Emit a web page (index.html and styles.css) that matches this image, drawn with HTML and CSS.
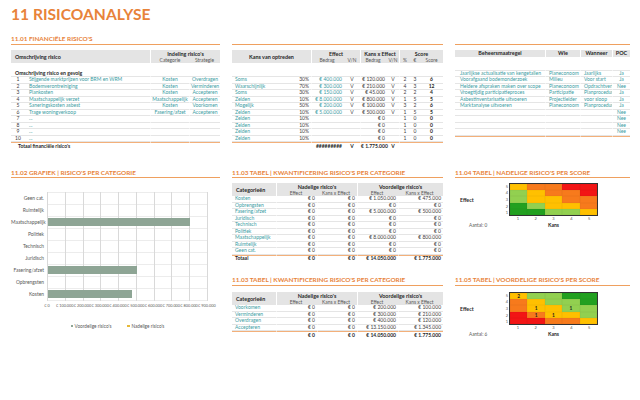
FILE: index.html
```html
<!DOCTYPE html>
<html lang="nl">
<head>
<meta charset="utf-8">
<title>11 Risicoanalyse</title>
<link rel="stylesheet" href="styles.css">
</head>
<body>
<div class="page">
  <h1 class="title">11 RISICOANALYSE</h1>

  <div class="band top">
    <section class="col">
      <h2 class="sec-head">11.01 FINANCIËLE RISICO'S</h2>
      <table class="tbl t1">
        <colgroup><col class="w14"><col class="w125"><col class="w39"><col class="w31"></colgroup>
        <thead>
          <tr><th colspan="2" rowspan="2" class="hl">Omschrijving risico</th><th colspan="2" class="g">Indeling risico's</th></tr>
          <tr><th class="sub g">Categorie</th><th class="sub">Strategie</th></tr>
        </thead>
        <tbody>
          <tr class="sp"><td colspan="4"></td></tr>
          <tr class="sp2"><td colspan="2" class="subhead">Omschrijving risico en gevolg</td><td class="g"></td><td></td></tr>
          <tr><td class="c">1</td><td class="tx">Stijgende marktprijzen voor BRM en WRM</td><td class="g c tx">Kosten</td><td class="g c tx">Overdragen</td></tr>
          <tr><td class="c">2</td><td class="tx">Bodemverontreiniging</td><td class="g c tx">Kosten</td><td class="g c tx">Verminderen</td></tr>
          <tr><td class="c">3</td><td class="tx">Plankosten</td><td class="g c tx">Kosten</td><td class="g c tx">Accepteren</td></tr>
          <tr><td class="c">4</td><td class="tx">Maatschappelijk verzet</td><td class="g c tx">Maatschappelijk</td><td class="g c tx">Accepteren</td></tr>
          <tr><td class="c">5</td><td class="tx">Saneringskosten asbest</td><td class="g c tx">Kosten</td><td class="g c tx">Voorkomen</td></tr>
          <tr><td class="c">6</td><td class="tx">Trage woningverkoop</td><td class="g c tx">Fasering/afzet</td><td class="g c tx">Accepteren</td></tr>
          <tr><td class="c">7</td><td class="tx">...</td><td class="g"></td><td class="g"></td></tr>
          <tr><td class="c">8</td><td class="tx">...</td><td class="g"></td><td class="g"></td></tr>
          <tr><td class="c">9</td><td class="tx">...</td><td class="g"></td><td class="g"></td></tr>
          <tr><td class="c">10</td><td class="tx">...</td><td class="g"></td><td class="g"></td></tr>
        </tbody>
        <tfoot>
          <tr><td colspan="2" class="tot-l">Totaal financiële risico's</td><td class="g"></td><td class="g"></td></tr>
        </tfoot>
      </table>
    </section>

    <section class="col">
      <div class="sec-head"></div>
      <table class="tbl t2">
        <colgroup><col class="w61"><col class="w18"><col class="w33"><col class="w16"><col class="w27"><col class="w12"><col class="w11"><col class="w10"><col class="w23"></colgroup>
        <thead>
          <tr><th colspan="2" rowspan="2">Kans van optreden</th><th colspan="2" class="g">Effect</th><th colspan="2" class="g">Kans x Effect</th><th colspan="3" class="g">Score</th></tr>
          <tr><th class="sub g r">Bedrag</th><th class="sub c">V/N</th><th class="sub g r">Bedrag</th><th class="sub c">V/N</th><th class="sub g c">%</th><th class="sub c">€</th><th class="sub c">Score</th></tr>
        </thead>
        <tbody>
          <tr class="sp"><td colspan="9"></td></tr>
          <tr class="sp2"><td colspan="2"></td><td class="g"></td><td></td><td class="g"></td><td></td><td class="g"></td><td></td><td></td></tr>
          <tr><td class="tx pl">Soms</td><td class="r">30%</td><td class="g r tx">€ 400.000</td><td class="c">V</td><td class="g r">€ 120.000</td><td class="c">V</td><td class="g c">2</td><td class="c">3</td><td class="c b">6</td></tr>
          <tr><td class="tx pl">Waarschijnlijk</td><td class="r">70%</td><td class="g r tx">€ 300.000</td><td class="c">V</td><td class="g r">€ 210.000</td><td class="c">V</td><td class="g c">4</td><td class="c">3</td><td class="c b">12</td></tr>
          <tr><td class="tx pl">Soms</td><td class="r">30%</td><td class="g r tx">€ 150.000</td><td class="c">V</td><td class="g r">€ 45.000</td><td class="c">V</td><td class="g c">2</td><td class="c">2</td><td class="c b">4</td></tr>
          <tr><td class="tx pl">Zelden</td><td class="r">10%</td><td class="g r tx">€ 8.000.000</td><td class="c">V</td><td class="g r">€ 800.000</td><td class="c">V</td><td class="g c">1</td><td class="c">5</td><td class="c b">5</td></tr>
          <tr><td class="tx pl">Mogelijk</td><td class="r">50%</td><td class="g r tx">€ 200.000</td><td class="c">V</td><td class="g r">€ 100.000</td><td class="c">V</td><td class="g c">3</td><td class="c">2</td><td class="c b">6</td></tr>
          <tr><td class="tx pl">Zelden</td><td class="r">10%</td><td class="g r tx">€ 5.000.000</td><td class="c">V</td><td class="g r">€ 500.000</td><td class="c">V</td><td class="g c">1</td><td class="c">5</td><td class="c b">5</td></tr>
          <tr><td class="tx pl">Zelden</td><td class="r">10%</td><td class="g"></td><td></td><td class="g r">€ 0</td><td></td><td class="g c">1</td><td class="c">0</td><td class="c b">0</td></tr>
          <tr><td class="tx pl">Zelden</td><td class="r">10%</td><td class="g"></td><td></td><td class="g r">€ 0</td><td></td><td class="g c">1</td><td class="c">0</td><td class="c b">0</td></tr>
          <tr><td class="tx pl">Zelden</td><td class="r">10%</td><td class="g"></td><td></td><td class="g r">€ 0</td><td></td><td class="g c">1</td><td class="c">0</td><td class="c b">0</td></tr>
          <tr><td class="tx pl">Zelden</td><td class="r">10%</td><td class="g"></td><td></td><td class="g r">€ 0</td><td></td><td class="g c">1</td><td class="c">0</td><td class="c b">0</td></tr>
        </tbody>
        <tfoot>
          <tr><td colspan="2"></td><td class="g r b">#########</td><td class="c b">V</td><td class="g r b">€ 1.775.000</td><td class="c b">V</td><td colspan="3" class="g"></td></tr>
        </tfoot>
      </table>
    </section>

    <section class="col">
      <div class="sec-head"></div>
      <table class="tbl t3">
        <colgroup><col class="w90"><col class="w35"><col class="w32"><col class="w18"></colgroup>
        <thead>
          <tr><th rowspan="2">Beheersmaatregel</th><th rowspan="2" class="g">Wie</th><th rowspan="2" class="g">Wanneer</th><th rowspan="2" class="g">POC</th></tr>
          <tr></tr>
        </thead>
        <tbody>
          <tr class="sp"><td colspan="4"></td></tr>
          <tr class="sp2"><td></td><td class="g"></td><td class="g"></td><td class="g"></td></tr>
          <tr><td class="tx pl5">Jaarlijkse actualisatie van kengetallen</td><td class="g tx pl">Planeconoom</td><td class="g tx pl">Jaarlijks</td><td class="g c tx">Ja</td></tr>
          <tr><td class="tx pl5">Voorafgaand bodemonderzoek</td><td class="g tx pl">Milieu</td><td class="g tx pl">Voor start</td><td class="g c tx">Ja</td></tr>
          <tr><td class="tx pl5">Heldere afspraken maken over scope</td><td class="g tx pl">Planeconoom</td><td class="g tx pl">Opdrachtverl</td><td class="g c tx">Nee</td></tr>
          <tr><td class="tx pl5">Vroegtijdig participatieproces</td><td class="g tx pl">Participatie</td><td class="g tx pl">Planprocedur</td><td class="g c tx">Ja</td></tr>
          <tr><td class="tx pl5">Asbestinventarisatie uitvoeren</td><td class="g tx pl">Projectleider</td><td class="g tx pl">voor sloop</td><td class="g c tx">Ja</td></tr>
          <tr><td class="tx pl5">Marktanalyse uitvoeren</td><td class="g tx pl">Planeconoom</td><td class="g tx pl">Planprocedur</td><td class="g c tx">Ja</td></tr>
          <tr><td></td><td class="g"></td><td class="g"></td><td class="g c tx">Nee</td></tr>
          <tr><td></td><td class="g"></td><td class="g"></td><td class="g c tx">Nee</td></tr>
          <tr><td></td><td class="g"></td><td class="g"></td><td class="g c tx">Nee</td></tr>
          <tr><td></td><td class="g"></td><td class="g"></td><td class="g c tx">Nee</td></tr>
        </tbody>
        <tfoot>
          <tr><td></td><td class="g"></td><td class="g"></td><td class="g"></td></tr>
        </tfoot>
      </table>
    </section>
  </div>

  <div class="band bottom">
    <h2 class="sec-head a1">11.02 GRAFIEK | RISICO'S PER CATEGORIE</h2>
    <div class="chart a2">
      <div class="plot-wrap">
        <div class="cats">
          <span>Geen cat.</span><span>Ruimtelijk</span><span>Maatschappelijk</span><span>Politiek</span><span>Technisch</span><span>Juridisch</span><span>Fasering/afzet</span><span>Opbrengsten</span><span>Kosten</span>
        </div>
        <div class="plot">
          <div class="bar-row"><div class="bar" style="width:0%"></div></div>
          <div class="bar-row"><div class="bar" style="width:0%"></div></div>
          <div class="bar-row"><div class="bar" style="width:88.9%"></div></div>
          <div class="bar-row"><div class="bar" style="width:0%"></div></div>
          <div class="bar-row"><div class="bar" style="width:0%"></div></div>
          <div class="bar-row"><div class="bar" style="width:0%"></div></div>
          <div class="bar-row"><div class="bar" style="width:55.6%"></div></div>
          <div class="bar-row"><div class="bar" style="width:0%"></div></div>
          <div class="bar-row"><div class="bar" style="width:52.8%"></div></div>
        </div>
      </div>
      <div class="axis">
        <span>€ 0</span><span>€ 100.000</span><span>€ 200.000</span><span>€ 300.000</span><span>€ 400.000</span><span>€ 500.000</span><span>€ 600.000</span><span>€ 700.000</span><span>€ 800.000</span><span>€ 900.000</span>
      </div>
      <div class="legend">
        <span class="lg-item"><i class="sw sw-v"></i>Voordelige risico's</span>
        <span class="lg-item"><i class="sw sw-n"></i>Nadelige risico's</span>
      </div>
    </div>

    <h2 class="sec-head b1">11.03 TABEL | KWANTIFICERING RISICO'S PER CATEGORIE</h2>
    <table class="tbl t4 b2">
      <colgroup><col class="w44"><col class="w41"><col class="w40"><col class="w41"><col class="w45"></colgroup>
      <thead>
        <tr><th rowspan="2" class="hl">Categorieën</th><th colspan="2" class="g">Nadelige risico's</th><th colspan="2" class="g">Voordelige risico's</th></tr>
        <tr><th class="sub g r">Effect</th><th class="sub r">Kans x Effect</th><th class="sub g r">Effect</th><th class="sub r">Kans x Effect</th></tr>
      </thead>
      <tbody>
        <tr><td class="tx pl">Kosten</td><td class="g r">€ 0</td><td class="g r">€ 0</td><td class="g r">€ 1.050.000</td><td class="g r">€ 475.000</td></tr>
        <tr><td class="tx pl">Opbrengsten</td><td class="g r">€ 0</td><td class="g r">€ 0</td><td class="g r">€ 0</td><td class="g r">€ 0</td></tr>
        <tr><td class="tx pl">Fasering/afzet</td><td class="g r">€ 0</td><td class="g r">€ 0</td><td class="g r">€ 5.000.000</td><td class="g r">€ 500.000</td></tr>
        <tr><td class="tx pl">Juridisch</td><td class="g r">€ 0</td><td class="g r">€ 0</td><td class="g r">€ 0</td><td class="g r">€ 0</td></tr>
        <tr><td class="tx pl">Technisch</td><td class="g r">€ 0</td><td class="g r">€ 0</td><td class="g r">€ 0</td><td class="g r">€ 0</td></tr>
        <tr><td class="tx pl">Politiek</td><td class="g r">€ 0</td><td class="g r">€ 0</td><td class="g r">€ 0</td><td class="g r">€ 0</td></tr>
        <tr><td class="tx pl">Maatschappelijk</td><td class="g r">€ 0</td><td class="g r">€ 0</td><td class="g r">€ 8.000.000</td><td class="g r">€ 800.000</td></tr>
        <tr><td class="tx pl">Ruimtelijk</td><td class="g r">€ 0</td><td class="g r">€ 0</td><td class="g r">€ 0</td><td class="g r">€ 0</td></tr>
        <tr><td class="tx pl">Geen cat.</td><td class="g r">€ 0</td><td class="g r">€ 0</td><td class="g r">€ 0</td><td class="g r">€ 0</td></tr>
      </tbody>
      <tfoot>
        <tr><td class="b pl">Totaal</td><td class="g r b">€ 0</td><td class="g r b">€ 0</td><td class="g r b">€ 14.050.000</td><td class="g r b">€ 1.775.000</td></tr>
      </tfoot>
    </table>

    <h2 class="sec-head b3">11.03 TABEL | KWANTIFICERING RISICO'S PER CATEGORIE</h2>
    <table class="tbl t4 b4">
      <colgroup><col class="w44"><col class="w41"><col class="w40"><col class="w41"><col class="w45"></colgroup>
      <thead>
        <tr><th rowspan="2" class="hl">Categorieën</th><th colspan="2" class="g">Nadelige risico's</th><th colspan="2" class="g">Voordelige risico's</th></tr>
        <tr><th class="sub g r">Effect</th><th class="sub r">Kans x Effect</th><th class="sub g r">Effect</th><th class="sub r">Kans x Effect</th></tr>
      </thead>
      <tbody>
        <tr><td class="tx pl">Voorkomen</td><td class="g r">€ 0</td><td class="g r">€ 0</td><td class="g r">€ 200.000</td><td class="g r">€ 100.000</td></tr>
        <tr><td class="tx pl">Verminderen</td><td class="g r">€ 0</td><td class="g r">€ 0</td><td class="g r">€ 300.000</td><td class="g r">€ 210.000</td></tr>
        <tr><td class="tx pl">Overdragen</td><td class="g r">€ 0</td><td class="g r">€ 0</td><td class="g r">€ 400.000</td><td class="g r">€ 120.000</td></tr>
        <tr><td class="tx pl">Accepteren</td><td class="g r">€ 0</td><td class="g r">€ 0</td><td class="g r">€ 13.150.000</td><td class="g r">€ 1.345.000</td></tr>
      </tbody>
      <tfoot>
        <tr><td></td><td class="g r b">€ 0</td><td class="g r b">€ 0</td><td class="g r b">€ 14.050.000</td><td class="g r b">€ 1.775.000</td></tr>
      </tfoot>
    </table>

    <h2 class="sec-head c1">11.04 TABEL | NADELIGE RISICO'S PER SCORE</h2>
    <div class="heat c2">
      <div class="h-eff">Effect</div>
      <div class="h-ylab"><span>5</span><span>4</span><span>3</span><span>2</span><span>1</span></div>
      <div class="h-grid">
        <i class="ye"></i><i class="or"></i><i class="or"></i><i class="rd"></i><i class="rd"></i>
        <i class="lg"></i><i class="ye"></i><i class="or"></i><i class="or"></i><i class="rd"></i>
        <i class="lg"></i><i class="ye"></i><i class="ye"></i><i class="or"></i><i class="or"></i>
        <i class="gn"></i><i class="lg"></i><i class="ye"></i><i class="ye"></i><i class="or"></i>
        <i class="gn"></i><i class="gn"></i><i class="lg"></i><i class="lg"></i><i class="ye"></i>
      </div>
      <div class="h-xlab"><span>1</span><span>2</span><span>3</span><span>4</span><span>5</span></div>
      <div class="h-aantal">Aantal: 0</div>
      <div class="h-kans">Kans</div>
    </div>

    <h2 class="sec-head c3">11.05 TABEL | VOORDELIGE RISICO'S PER SCORE</h2>
    <div class="heat c4">
      <div class="h-eff">Effect</div>
      <div class="h-ylab"><span>5</span><span>4</span><span>3</span><span>2</span><span>1</span></div>
      <div class="h-grid">
        <i class="ye">2</i><i class="lg"></i><i class="lg"></i><i class="gn"></i><i class="gn"></i>
        <i class="or"></i><i class="ye"></i><i class="lg"></i><i class="lg"></i><i class="gn"></i>
        <i class="or"></i><i class="ye">1</i><i class="ye"></i><i class="lg">1</i><i class="lg"></i>
        <i class="rd"></i><i class="or">1</i><i class="ye">1</i><i class="ye"></i><i class="lg"></i>
        <i class="rd"></i><i class="rd"></i><i class="or"></i><i class="or"></i><i class="ye"></i>
      </div>
      <div class="h-xlab"><span>1</span><span>2</span><span>3</span><span>4</span><span>5</span></div>
      <div class="h-aantal">Aantal: 6</div>
      <div class="h-kans">Kans</div>
    </div>
  </div>
</div>
</body>
</html>
```

FILE: styles.css
```css
* { box-sizing: border-box; }
html, body { margin: 0; padding: 0; background: #ffffff; }
body {
  width: 640px;
  height: 400px;
  overflow: hidden;
  font-family: Lato, "Open Sans", "Liberation Sans", sans-serif;
  color: #404040;
}
.page { padding: 4px 0 0 11px; }

.title {
  margin: 0;
  font-size: 15.6px;
  line-height: 20px;
  font-weight: 700;
  color: #e8833a;
}

.band {
  display: grid;
  grid-template-columns: 209px 211px 175px;
  column-gap: 12px;
}
.top { margin-top: 11px; }
.bottom { margin-top: 19px; align-items: start; }

.sec-head {
  margin: 0;
  height: 9.5px;
  font-size: 6.4px;
  line-height: 8px;
  font-weight: 700;
  color: #e8833a;
  white-space: nowrap;
  border-bottom: 1.5px solid #efa05f;
}

/* tables */
.tbl {
  width: 100%;
  margin-top: 5.5px;
  border-collapse: separate;
  border-spacing: 0;
  table-layout: fixed;
  font-size: 5px;
}
.tbl th, .tbl td {
  padding: 0;
  height: 6.5px;
  line-height: 5px;
  white-space: nowrap;
  font-weight: 400;
}
.t3 td { overflow: hidden; }
.tbl thead th {
  background: #e4e4e4;
  color: #262626;
  font-weight: 700;
  font-size: 5.4px;
  line-height: 6px;
  text-align: center;
}
.tbl thead th.sub {
  font-weight: 400;
  color: #595959;
  font-size: 4.9px;
}
.tbl thead tr:first-child th[colspan]:not([rowspan]) { vertical-align: bottom; }
.tbl thead th.hl { text-align: left; padding-left: 4px; }

.tbl tbody td { border-bottom: 1px solid #e5e5e5; }
.tbl tbody tr.sp td { border-bottom: 0; height: 7px; }
.tbl tbody tr.sp2 td { height: 7px; }
.tbl tfoot td {
  height: 7.5px;
  border-top: 1.5px solid #f3b07a;
  color: #262626;
}

.g { border-left: 1.5px solid #ffffff; }
.c { text-align: center; }
.r { text-align: right; padding-right: 2px !important; }
.b { font-weight: 700 !important; color: #1f1f1f; }
.tx { color: #3a9ca3; }
.pl { padding-left: 3px !important; }
.pl5 { padding-left: 5px !important; }
.t1 .tx:not(.c) { padding-left: 4px; }
.subhead { font-weight: 700 !important; color: #262626; font-size: 5.2px; padding-left: 4px !important; }
.tot-l { font-weight: 700 !important; padding-left: 7px !important; }

.w10 { width: 10px; } .w11 { width: 11px; } .w12 { width: 12px; } .w14 { width: 14px; }
.w16 { width: 16px; } .w18 { width: 18px; } .w23 { width: 23px; } .w27 { width: 27px; }
.w31 { width: 31px; } .w32 { width: 32px; } .w33 { width: 33px; } .w35 { width: 35px; }
.w39 { width: 39px; } .w40 { width: 40px; } .w41 { width: 41px; } .w44 { width: 44px; }
.w45 { width: 45px; } .w61 { width: 61px; } .w90 { width: 90px; } .w125 { width: 125px; }

/* bottom band placement */
.a1 { grid-column: 1; grid-row: 1; }
.a2 { grid-column: 1; grid-row: 2 / span 3; }
.b1 { grid-column: 2; grid-row: 1; }
.b2 { grid-column: 2; grid-row: 2; margin-top: 5px; }
.b3 { grid-column: 2; grid-row: 3; margin-top: 14px; }
.b4 { grid-column: 2; grid-row: 4; margin-top: 6.5px; }
.c1 { grid-column: 3; grid-row: 1; }
.c2 { grid-column: 3; grid-row: 2; margin-top: 5px; }
.c3 { grid-column: 3; grid-row: 3; margin-top: 14px; }
.c4 { grid-column: 3; grid-row: 4; margin-top: 6.5px; }

/* chart */
.chart { margin-top: 14px; font-size: 4.9px; color: #595959; }
.plot-wrap { display: flex; }
.cats { width: 36px; display: flex; flex-direction: column; }
.cats span { height: 12px; line-height: 12px; text-align: right; padding-right: 3px; white-space: nowrap; }
.plot {
  width: 161px;
  height: 109px;
  background-image:
    repeating-linear-gradient(to right, #d9d9d9 0 1px, transparent 1px 17.78px),
    repeating-linear-gradient(to bottom, #ececec 0 1px, transparent 1px 12px);
}
.bar-row { height: 12px; display: flex; align-items: center; padding-left: 1px; }
.bar { height: 8.5px; background: #8ea595; }
.axis { display: flex; margin-left: 27.1px; margin-top: 2px; }
.axis span {
  flex: none;
  width: 17.78px;
  display: flex;
  justify-content: center;
  white-space: nowrap;
  line-height: 6px;
  font-size: 3.85px;
}
.legend { display: flex; justify-content: center; gap: 16px; margin-top: 14px; padding-left: 4px; line-height: 6px; font-size: 4.7px; }
.lg-item { display: flex; align-items: center; gap: 1.5px; white-space: nowrap; }
.sw { display: block; width: 2.5px; height: 2.5px; }
.sw-v { background: #8ea595; }
.sw-n { background: #e6b93a; }

/* heatmaps */
.heat {
  display: grid;
  grid-template-columns: 48px 6px 89px;
  grid-template-rows: 33px 6px 7px;
  font-size: 4.4px;
  color: #595959;
}
.h-eff { grid-column: 1; grid-row: 1; align-self: center; padding-left: 5px; font-weight: 700; font-size: 5.2px; color: #262626; }
.h-ylab { grid-column: 2; grid-row: 1; display: flex; flex-direction: column; }
.h-ylab span { flex: 1; display: flex; align-items: center; justify-content: flex-end; padding-right: 1px; font-size: 4px; }
.h-grid {
  grid-column: 3; grid-row: 1;
  display: grid;
  grid-template-columns: repeat(5, 1fr);
  grid-template-rows: repeat(5, 1fr);
  border: 1px solid #333333;
}
.h-grid i {
  font-style: normal;
  display: flex; align-items: center; justify-content: center;
  font-weight: 700; font-size: 4.8px; color: #1f1f1f;
  box-shadow: inset 0 0 0 0.3px rgba(0,0,0,0.08);
}
.gn { background: #22a020; }
.lg { background: #92d050; }
.ye { background: #ffc000; }
.or { background: #f77a1c; }
.rd { background: #f21515; }
.h-xlab { grid-column: 3; grid-row: 2; display: grid; grid-template-columns: repeat(5, 1fr); }
.h-xlab span { text-align: center; line-height: 6px; font-size: 4px; }
.h-aantal { grid-column: 1 / span 2; grid-row: 3; padding-left: 14px; line-height: 7px; font-size: 4.7px; }
.h-kans { grid-column: 3; grid-row: 3; text-align: center; line-height: 7px; font-weight: 700; font-size: 5px; color: #262626; }
```
